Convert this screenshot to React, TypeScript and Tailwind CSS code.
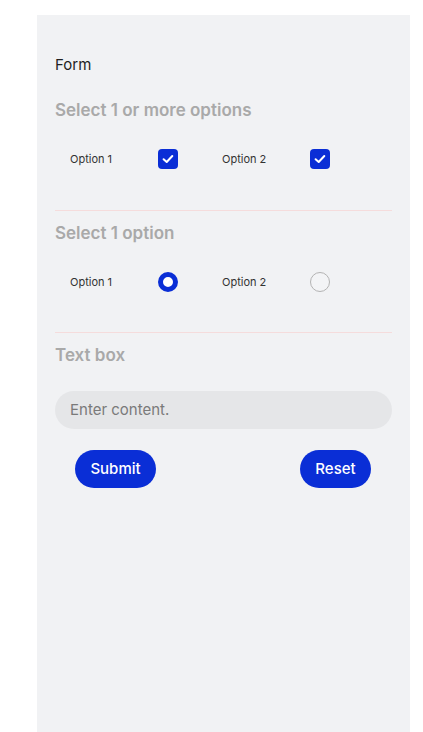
import React from "react";

const font = { fontFamily: "Inter, 'Noto Sans', sans-serif" };

function Checkbox() {
  return (
    <div className="w-[20px] h-[20px] rounded-[4px] bg-[#0a2ed6] flex items-center justify-center">
      <svg width="14" height="14" viewBox="0 0 14 14" fill="none">
        <path d="M2.6 7.2 L5.7 10 L11.3 4" stroke="white" strokeWidth="2" strokeLinecap="round" strokeLinejoin="round" />
      </svg>
    </div>
  );
}

function Radio({ checked }: { checked: boolean }) {
  return checked ? (
    <div className="w-[20px] h-[20px] rounded-full border-[5px] border-[#0a2ed6] bg-white" />
  ) : (
    <div className="w-[20px] h-[20px] rounded-full border-[1.5px] border-[#b3b3b3] bg-[#f3f4f6]" />
  );
}

function Option({ label, children }: { label: string; children: React.ReactNode }) {
  return (
    <div className="w-[152px] flex items-center h-[20px]">
      <span className="w-[103px] pl-[15px] text-[11px] text-[#333]">{label}</span>
      {children}
    </div>
  );
}

function Heading({ children, mt }: { children: React.ReactNode; mt: string }) {
  return (
    <div className={`${mt} h-[24px] leading-[24px] text-[17px] font-semibold text-[#a9a9a9]`}>{children}</div>
  );
}

export default function App() {
  return (
    <div className="w-[423px] h-[732px] bg-white" style={font}>
      <div className="ml-[37px] w-[373px] h-[732px] pt-[15px]">
        <div className="h-[717px] bg-[#f1f2f4] px-[18px] pt-[40px] flex flex-col">
          <div className="h-[20px] leading-[20px] text-[15px] text-[#1f1f1f]">Form</div>
          <Heading mt="mt-[23px]">Select 1 or more options</Heading>
          <div className="mt-[27px] flex">
            <Option label="Option 1"><Checkbox /></Option>
            <Option label="Option 2"><Checkbox /></Option>
          </div>
          <div className="mt-[41px] h-px bg-[#f5dcdc]" />
          <Heading mt="mt-[10px]">Select 1 option</Heading>
          <div className="mt-[27px] flex">
            <Option label="Option 1"><Radio checked /></Option>
            <Option label="Option 2"><Radio checked={false} /></Option>
          </div>
          <div className="mt-[40px] h-px bg-[#f5dcdc]" />
          <Heading mt="mt-[10px]">Text box</Heading>
          <div className="mt-[24px] h-[38px] rounded-full bg-[#e5e6e8] flex items-center pl-[15px] text-[15px] text-[#7a7a7a]">
            Enter content.
          </div>
          <div className="mt-[21px] flex justify-between px-[20px]">
            <button className="w-[81px] h-[38px] rounded-full bg-[#0a2ed6] text-white text-[15px] font-medium">Submit</button>
            <button className="w-[71px] h-[38px] rounded-full bg-[#0a2ed6] text-white text-[15px] font-medium mr-[1px]">Reset</button>
          </div>
        </div>
      </div>
    </div>
  );
}
